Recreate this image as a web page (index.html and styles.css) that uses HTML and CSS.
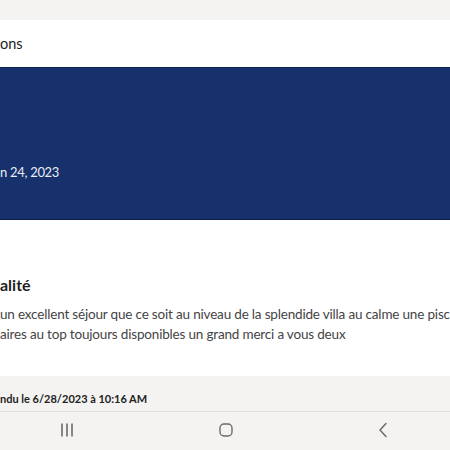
FILE: index.html
```html
<!DOCTYPE html>
<html lang="fr">
<head>
<meta charset="utf-8">
<link rel="stylesheet" href="styles.css">
</head>
<body>
<div class="page">
  <div class="topband"></div>
  <header class="header"><span class="header-title">ons</span></header>
  <section class="hero">
    <div class="hero-date">n 24, 2023</div>
  </section>
  <section class="review">
    <h2 class="review-title">alité</h2>
    <p class="review-text">un excellent séjour que ce soit au niveau de la splendide villa au calme une piscine</p>
    <p class="review-text">aires au top toujours disponibles un grand merci a vous deux</p>
  </section>
  <section class="response">
    <div class="response-meta">ndu le 6/28/2023 à 10:16 AM</div>
  </section>
  <nav class="navbar">
    <svg class="nav-icon" width="14" height="16" viewBox="0 0 14 16"><path d="M2 1.5v13M7 1.5v13M12 1.5v13" stroke="#6b6b6b" stroke-width="1.6" fill="none"/></svg>
    <svg class="nav-icon" width="14" height="14" viewBox="0 0 14 14"><rect x="1" y="1" width="12" height="12" rx="4" stroke="#6b6b6b" stroke-width="1.4" fill="none"/></svg>
    <svg class="nav-icon" width="10" height="16" viewBox="0 0 10 16"><path d="M8 1.5L2 8l6 6.5" stroke="#6b6b6b" stroke-width="1.5" fill="none" stroke-linecap="round" stroke-linejoin="round"/></svg>
  </nav>
</div>
</body>
</html>
```
FILE: styles.css
```css
* { box-sizing: border-box; margin: 0; padding: 0; }
html, body { width: 450px; height: 450px; overflow: hidden; background: #f4f3f1; }
body { font-family: "Lato", "Liberation Sans", sans-serif; }
.page { display: flex; flex-direction: column; height: 450px; }
.topband { height: 20px; background: #f4f3f1; }
.header { height: 48px; background: #fff; display: flex; align-items: center; border-bottom: 1px solid #0e2252; }
.header-title { font-size: 14.5px; color: #222; }
.hero { height: 152px; background: #16316b; border-bottom: 1px solid #0b1c45; padding-top: 94px; }
.hero-date { font-size: 13px; color: #e9edf5; line-height: 20px; letter-spacing: -0.3px; }
.review { background: #fff; height: 156px; padding-top: 54px; overflow: hidden; }
.review-title { font-size: 16px; font-weight: 700; color: #1e1e1e; line-height: 22px; }
.review-text { font-size: 13.5px; color: #444; line-height: 20px; white-space: nowrap; overflow: hidden; letter-spacing: -0.18px; }
.review-title + .review-text { margin-top: 8px; }
.response { height: 36px; padding-top: 16px; border-bottom: 1px solid #e2e1df; }
.response-meta { font-size: 11px; font-weight: 700; color: #222; line-height: 14px; }
.navbar { flex: 1; display: flex; align-items: center; justify-content: space-between; padding: 0 62px 2px 60px; }
```
